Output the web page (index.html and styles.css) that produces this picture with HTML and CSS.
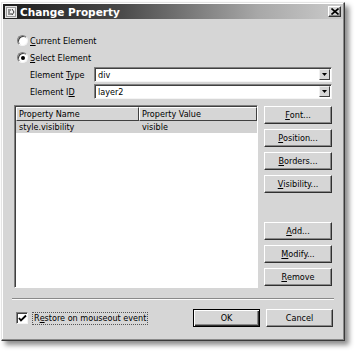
FILE: index.html
```html
<!DOCTYPE html>
<html>
<head>
<meta charset="utf-8">
<link rel="stylesheet" href="styles.css">
</head>
<body>
<div class="dialog">
  <div class="titlebar">
    <svg class="ticon" width="12" height="12" viewBox="0 0 12 12">
      <rect x="0.5" y="0.5" width="11" height="11" fill="#9a9a9a" stroke="#e0e0e0"/>
      <rect x="2" y="2" width="8" height="8" fill="#f0f0f0"/>
      <path d="M3 4 h3 M3 6 h2 M3 8 h4" stroke="#333" stroke-width="1"/>
      <path d="M7 3 l2 3 l-2 3" stroke="#333" fill="none"/>
    </svg>
    <span class="ttext">Change Property</span>
    <div class="close">
      <svg width="8" height="7" viewBox="0 0 8 7"><path d="M0.5 0.5 L7.5 6.5 M7.5 0.5 L0.5 6.5" stroke="#000" stroke-width="1.6"/></svg>
    </div>
  </div>
  <div class="body">
    <div class="radios">
      <div class="rrow"><span class="radio"></span><span><u>C</u>urrent Element</span></div>
      <div class="rrow"><span class="radio checked"></span><span><u>S</u>elect Element</span></div>
    </div>
    <div class="fields">
      <div class="frow"><span class="flabel">Element <u>T</u>ype</span><div class="combo"><span class="cval">div</span><span class="cbtn"><svg width="5" height="3" viewBox="0 0 5 3"><path d="M0 0h5L2.5 3z" fill="#000"/></svg></span></div></div>
      <div class="frow"><span class="flabel">Element I<u>D</u></span><div class="combo"><span class="cval">layer2</span><span class="cbtn"><svg width="5" height="3" viewBox="0 0 5 3"><path d="M0 0h5L2.5 3z" fill="#000"/></svg></span></div></div>
    </div>
    <div class="main">
      <div class="table">
        <div class="thead">
          <div class="th c1">Property Name</div>
          <div class="th c2">Property Value</div>
        </div>
        <div class="trow sel">
          <div class="td c1">style.visibility</div>
          <div class="td c2">visible</div>
        </div>
      </div>
      <div class="side">
        <div class="group">
          <div class="btn"><u>F</u>ont...</div>
          <div class="btn"><u>P</u>osition...</div>
          <div class="btn"><u>B</u>orders...</div>
          <div class="btn"><u>V</u>isibility...</div>
        </div>
        <div class="group">
          <div class="btn"><u>A</u>dd...</div>
          <div class="btn"><u>M</u>odify...</div>
          <div class="btn"><u>R</u>emove</div>
        </div>
      </div>
    </div>
    <div class="sep"></div>
    <div class="footer">
      <div class="chk">
        <span class="cbox"><svg width="9" height="9" viewBox="0 0 9 9"><path d="M1 4 L3 6.5 L8 1.5" stroke="#000" stroke-width="1.8" fill="none"/></svg></span>
        <span class="clabel">R<u>e</u>store on mouseout event</span>
      </div>
      <div class="fbtns">
        <div class="btn ok">OK</div>
        <div class="btn">Cancel</div>
      </div>
    </div>
  </div>
</div>
</body>
</html>
```

FILE: styles.css
```css
* { box-sizing: border-box; }
html, body { margin: 0; padding: 0; background: #fff; }
body {
  font-family: "DejaVu Sans Condensed", "DejaVu Sans", sans-serif;
  font-stretch: condensed;
  font-size: 9px;
  color: #000;
  width: 358px;
  height: 353px;
  overflow: hidden;
}
u { text-decoration: underline; text-underline-offset: 1px; }
.dialog {
  margin: 2px 0 0 1px;
  width: 344px;
  height: 339px;
  background: #d6d6d6;
  border: 1px solid;
  border-color: #e4e4e4 #3a3a3a #3a3a3a #e4e4e4;
  box-shadow: inset -1px -1px 0 #8a8a8a, inset 1px 1px 0 #fff, 4px 4px 5px rgba(0,0,0,0.45);
  padding: 1px;
  display: flex;
  flex-direction: column;
}
.titlebar {
  height: 15px;
  background: linear-gradient(to right, #1c1c1c 0%, #4a4a4a 35%, #a8a8a8 75%, #cbcbcb 100%);
  display: flex;
  align-items: center;
  padding: 0 2px 0 2px;
}
.ticon { display: block; flex: none; }
.ttext {
  color: #fff;
  font-family: "DejaVu Sans", sans-serif;
  font-stretch: normal;
  font-weight: bold;
  font-size: 10.5px;
  margin-left: 3px;
  flex: 1;
}
.close {
  width: 13px;
  height: 11px;
  background: #d6d6d6;
  border: 1px solid;
  border-color: #fff #333 #333 #fff;
  box-shadow: inset -1px -1px 0 #888;
  display: flex;
  align-items: center;
  justify-content: center;
}
.close svg { display: block; }
.body { flex: 1; display: flex; flex-direction: column; padding: 13px 0 0 0; }
.radios { padding-left: 14px; }
.rrow { height: 17px; display: flex; align-items: center; }
.radio {
  width: 11px; height: 11px; border-radius: 50%;
  background: #fff;
  border: 1px solid;
  border-color: #808080 #f4f4f4 #f4f4f4 #808080;
  box-shadow: inset 1px 1px 0 #404040;
  margin-right: 2px;
  display: flex; align-items: center; justify-content: center;
  flex: none;
}
.radio.checked::after {
  content: ""; width: 4px; height: 4px; border-radius: 50%; background: #000;
}
.fields { margin-top: 1px; padding-left: 27px; display: flex; flex-direction: column; gap: 2px; }
.frow { display: flex; align-items: center; height: 15px; }
.flabel { width: 64px; flex: none; }
.combo {
  width: 238px; height: 15px;
  background: #fff;
  border: 1px solid;
  border-color: #808080 #f4f4f4 #f4f4f4 #808080;
  box-shadow: inset 1px 1px 0 #404040;
  display: flex; align-items: center;
  padding: 0 1px 0 3px;
}
.cval { flex: 1; }
.cbtn {
  width: 11px; height: 11px;
  background: #d6d6d6;
  border: 1px solid;
  border-color: #f0f0f0 #404040 #404040 #f0f0f0;
  display: flex; align-items: center; justify-content: center;
}
.cbtn svg { display: block; }
.main { margin-top: 6px; padding-left: 11px; display: flex; gap: 6px; height: 183px; }
.table {
  width: 244px; height: 183px;
  background: #fff;
  border: 1px solid;
  border-color: #808080 #fff #fff #808080;
  box-shadow: inset 1px 1px 0 #404040;
  padding: 1px 0 0 1px;
}
.thead { display: flex; height: 14px; }
.th {
  background: #d6d6d6;
  border: 1px solid;
  border-color: #fff #404040 #404040 #fff;
  padding-left: 2px;
  display: flex; align-items: center;
}
.th.c1 { width: 123px; }
.th.c2 { flex: 1; }
.trow { display: flex; height: 12px; align-items: center; }
.trow.sel { background: #d2d2d2; }
.td { padding-left: 3px; }
.td.c1 { width: 123px; }
.side { width: 68px; display: flex; flex-direction: column; gap: 29px; padding-top: 1px; }
.group { display: flex; flex-direction: column; gap: 5px; }
.btn {
  height: 18px;
  background: #d6d6d6;
  border: 1px solid;
  border-color: #fff #303030 #303030 #fff;
  box-shadow: inset -1px -1px 0 #8a8a8a;
  display: flex; align-items: center; justify-content: center;
}
.sep {
  margin: 10px 9px 0 9px;
  height: 2px;
  border-top: 1px solid #8a8a8a;
  border-bottom: 1px solid #fafafa;
}
.footer { display: flex; align-items: center; margin-top: 9px; height: 18px; padding: 0 10px 0 13px; }
.chk { display: flex; align-items: center; flex: 1; }
.cbox {
  width: 12px; height: 12px;
  background: #fff;
  border: 1px solid;
  border-color: #808080 #f4f4f4 #f4f4f4 #808080;
  box-shadow: inset 1px 1px 0 #404040;
  display: flex; align-items: center; justify-content: center;
  padding: 1px 0 0 1px;
}
.cbox svg { display: block; }
.clabel {
  margin-left: 4px;
  border: 1px dotted #555;
  padding: 0 1px;
  height: 13px;
  display: flex; align-items: center;
}
.fbtns { display: flex; gap: 6px; }
.fbtns .btn { width: 67px; }
.btn.ok { border-color: #000; box-shadow: inset 1px 1px 0 #fff, inset -1px -1px 0 #303030, inset -2px -2px 0 #8a8a8a; }
```
